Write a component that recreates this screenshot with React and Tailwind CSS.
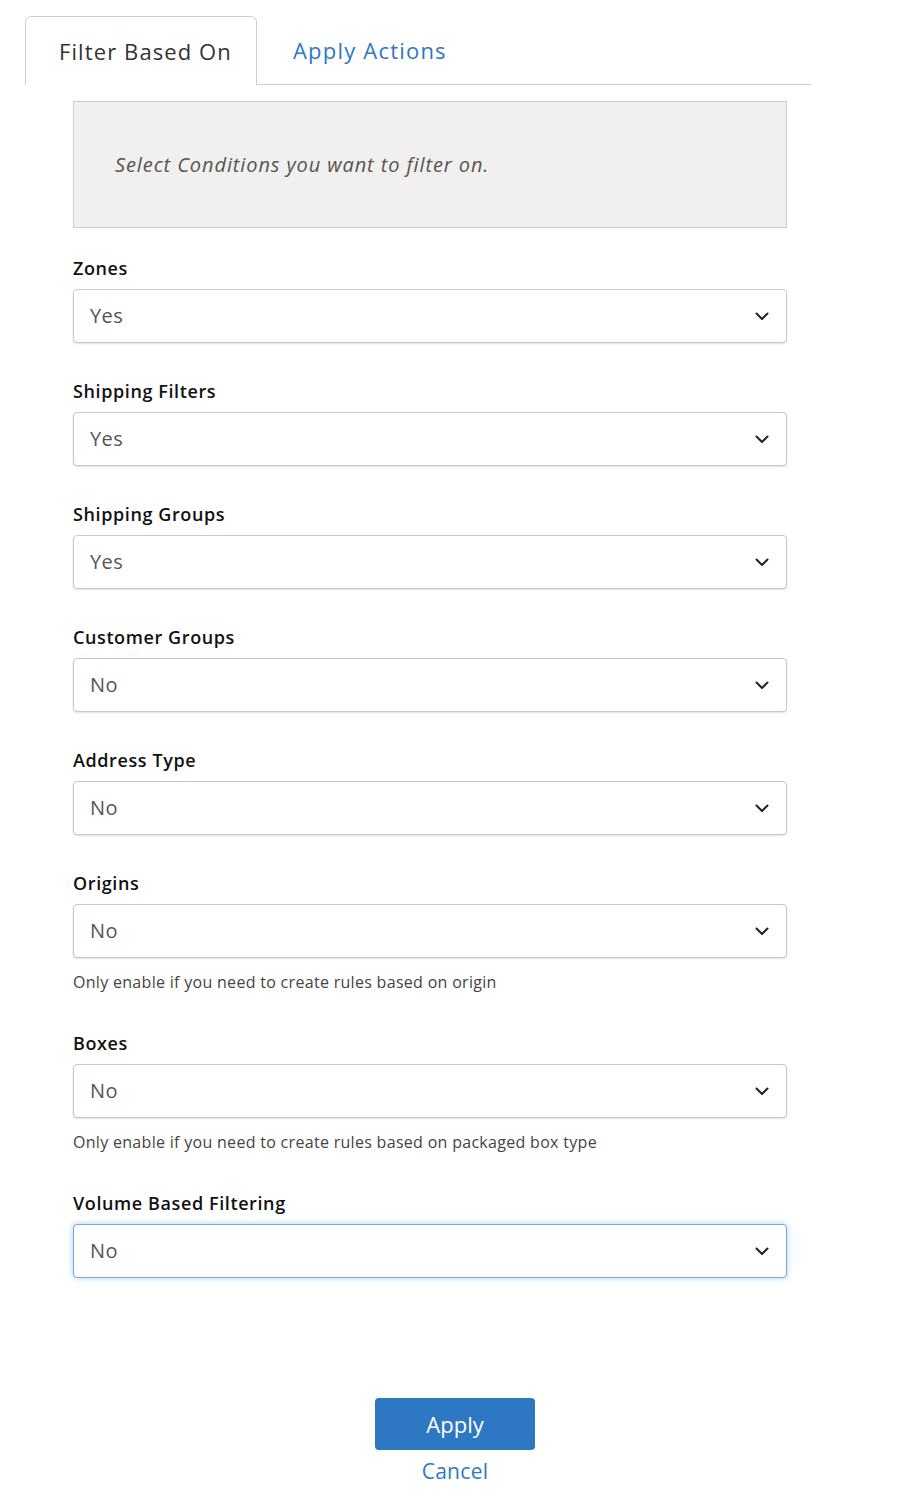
import React from "react";

const fields = [
  { label: "Zones", value: "Yes" },
  { label: "Shipping Filters", value: "Yes" },
  { label: "Shipping Groups", value: "Yes" },
  { label: "Customer Groups", value: "No" },
  { label: "Address Type", value: "No" },
  { label: "Origins", value: "No", help: "Only enable if you need to create rules based on origin" },
  { label: "Boxes", value: "No", help: "Only enable if you need to create rules based on packaged box type" },
  { label: "Volume Based Filtering", value: "No", focused: true },
];

const Chevron = () => (
  <svg width="16" height="16" viewBox="0 0 16 16" fill="none">
    <path d="M2.5 5.5L8 11l5.5-5.5" stroke="#222" strokeWidth="2" strokeLinecap="round" strokeLinejoin="round" />
  </svg>
);

const Field = ({ field }) => (
  <div className="mb-[37px]">
    <div className="text-[18px] leading-[22px] font-semibold tracking-[0.6px] text-[#111] mb-[10px]">{field.label}</div>
    <div
      className={
        "h-[54px] flex items-center justify-between pl-[16px] pr-[16px] bg-white rounded-[4px] border " +
        (field.focused
          ? "border-[#6ea8e6] shadow-[0_0_6px_rgba(80,150,230,0.45)]"
          : "border-[#c8c8c8] shadow-[0_1px_2px_rgba(0,0,0,0.12)]")
      }
    >
      <span className="text-[20px] tracking-[0.4px] text-[#555]">{field.value}</span>
      <Chevron />
    </div>
    {field.help && (
      <div className="mt-[14px] pb-[3px] text-[16px] leading-[20px] tracking-[0.3px] text-[#444]">{field.help}</div>
    )}
  </div>
);

export default function App() {
  return (
    <div className="min-h-screen bg-white font-['Open_Sans',sans-serif] pt-[16px]">
      {/* Tabs */}
      <div className="flex ml-[25px] w-[786px]">
        <div className="w-[232px] h-[69px] border border-b-0 border-[#cfcfcf] rounded-t-[6px] flex items-center pl-[33px] text-[22px] tracking-[1.1px] text-[#333]">
          Filter Based On
        </div>
        <div className="flex-1 border-b border-[#cfcfcf] flex items-center pl-[36px] text-[22px] tracking-[1.2px] text-[#2f78c4]">
          Apply Actions
        </div>
      </div>

      <div className="ml-[73px] w-[714px] mt-[16px]">
        {/* Info box */}
        <div className="h-[127px] bg-[#f1f0ef] border border-[#cccccc] flex items-center pl-[41px] mb-[29px]">
          <span className="italic text-[20px] tracking-[0.9px] text-[#555]">Select Conditions you want to filter on.</span>
        </div>

        {fields.map((f) => (
          <Field key={f.label} field={f} />
        ))}
      </div>

      {/* Actions */}
      <div className="flex flex-col items-center mt-[120px]">
        <button className="w-[160px] h-[52px] bg-[#2e77c3] rounded-[4px] text-white text-[22px]">Apply</button>
        <a href="#" className="mt-[8px] text-[21px] tracking-[0.3px] text-[#2f78c4] leading-[26px]">Cancel</a>
      </div>
    </div>
  );
}
